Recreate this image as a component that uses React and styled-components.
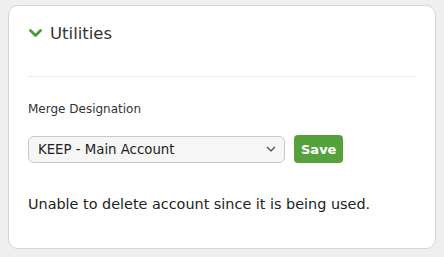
import React from 'react'
import styled, { createGlobalStyle } from 'styled-components'

const GlobalStyle = createGlobalStyle`
  html, body {
    margin: 0;
    padding: 0;
    background: #efefef;
    font-family: 'DejaVu Sans', Verdana, sans-serif;
  }
`

const Page = styled.div`
  padding: 5px 8px;
`

const Card = styled.section`
  box-sizing: border-box;
  height: 244px;
  background: #fff;
  border: 1px solid #d6d6d6;
  border-radius: 10px;
  padding: 0 19px;
`

const Header = styled.div`
  display: flex;
  align-items: center;
  gap: 8px;
  height: 71px;
  padding: 0 0 16px 1px;
  box-sizing: border-box;
  border-bottom: 1px solid #ebebeb;
`

const Title = styled.h2`
  margin: 0;
  font-size: 16.5px;
  font-weight: normal;
  color: #333;
`

const Label = styled.div`
  margin-top: 25px;
  font-size: 12px;
  color: #333;
`

const Row = styled.div`
  display: flex;
  align-items: center;
  gap: 9px;
  margin-top: 19px;
`

const SelectWrap = styled.div`
  position: relative;
  width: 257px;
  height: 27px;
`

const Select = styled.select`
  appearance: none;
  box-sizing: border-box;
  width: 100%;
  height: 100%;
  padding: 0 28px 0 9px;
  font-family: inherit;
  font-size: 13.3px;
  color: #222;
  background: #f6f6f6;
  border: 1px solid #c9c9c9;
  border-radius: 6px;
`

const Caret = styled.svg`
  position: absolute;
  right: 9px;
  top: 10px;
  pointer-events: none;
`

const SaveButton = styled.button`
  height: 28px;
  padding: 0 7px;
  font-family: inherit;
  font-size: 13px;
  font-weight: bold;
  color: #fff;
  background: #55a23d;
  border: none;
  border-radius: 4px;
`

const Message = styled.p`
  margin: 33px 0 0;
  font-size: 14.4px;
  color: #222;
`

const Chevron = () => (
  <svg width="13" height="10" viewBox="0 0 13 10">
    <path d="M1.5 2.5 L6.5 7.5 L11.5 2.5" fill="none" stroke="#4c9a35" strokeWidth="2.8" strokeLinecap="round" strokeLinejoin="round" />
  </svg>
)

const App = () => (
  <>
    <GlobalStyle />
    <Page>
      <Card>
        <Header>
          <Chevron />
          <Title>Utilities</Title>
        </Header>
        <Label>Merge Designation</Label>
        <Row>
          <SelectWrap>
            <Select defaultValue="keep">
              <option value="keep">KEEP - Main Account</option>
            </Select>
            <Caret width="10" height="6" viewBox="0 0 10 6">
              <path d="M1 1 L5 5 L9 1" fill="none" stroke="#444" strokeWidth="1.2" />
            </Caret>
          </SelectWrap>
          <SaveButton>Save</SaveButton>
        </Row>
        <Message>Unable to delete account since it is being used.</Message>
      </Card>
    </Page>
  </>
)

export default App
